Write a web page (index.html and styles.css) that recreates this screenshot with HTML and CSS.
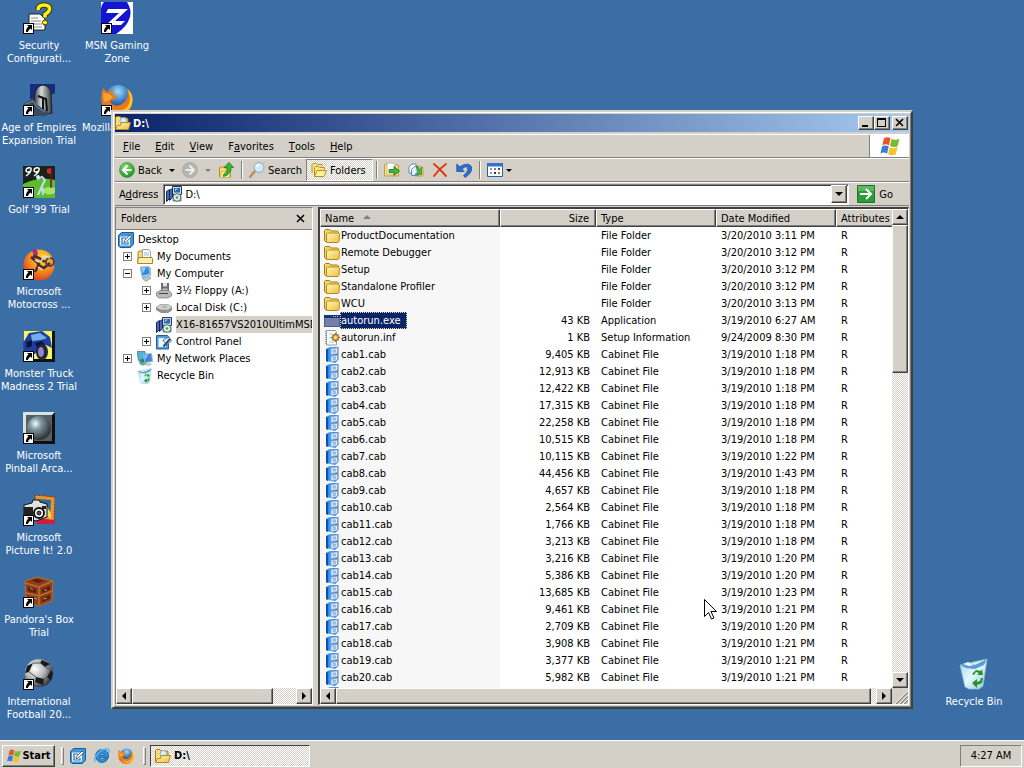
FILE: index.html
```html
<!DOCTYPE html>
<html lang="en">
<head>
  <meta charset="UTF-8">
  <meta name="viewport" content="width=device-width, initial-scale=1.0">
  <title>D:\</title>
  <link rel="stylesheet" href="styles.css">
</head>
<body>
  <!-- icon sprites -->
  <svg class="sprites" aria-hidden="true">
    <defs>
      <linearGradient id="g-folder" x1="0" y1="0" x2="1" y2="1"><stop offset="0" stop-color="#fff9b4"/><stop offset="1" stop-color="#ecbf40"/></linearGradient>
      <linearGradient id="g-cab" x1="0" y1="0" x2="1" y2="0"><stop offset="0" stop-color="#1263c8"/><stop offset=".35" stop-color="#4aa4f8"/><stop offset="1" stop-color="#3f7cc0"/></linearGradient>
      <radialGradient id="g-green" cx=".4" cy=".3" r=".7"><stop offset="0" stop-color="#8fdc7c"/><stop offset="1" stop-color="#1f9426"/></radialGradient>
      <radialGradient id="g-ball" cx=".35" cy=".35" r=".7"><stop offset="0" stop-color="#fff"/><stop offset=".5" stop-color="#b4b8b8"/><stop offset="1" stop-color="#333"/></radialGradient>
      <radialGradient id="g-steel" cx=".35" cy=".32" r=".7"><stop offset="0" stop-color="#f4fcff"/><stop offset=".35" stop-color="#7f97a3"/><stop offset="1" stop-color="#2c3030"/></radialGradient>
      <radialGradient id="g-globe" cx=".5" cy=".25" r=".7"><stop offset="0" stop-color="#9fdcf8"/><stop offset=".6" stop-color="#2f74c4"/><stop offset="1" stop-color="#153a86"/></radialGradient>
      <radialGradient id="g-sun" cx=".6" cy=".3" r=".7"><stop offset="0" stop-color="#ffe03c"/><stop offset=".6" stop-color="#f58a1c"/><stop offset="1" stop-color="#e0421c"/></radialGradient>
      <linearGradient id="g-bin" x1="0" y1="0" x2="1" y2="1"><stop offset="0" stop-color="#a4d4f4"/><stop offset=".5" stop-color="#e4f8fb"/><stop offset="1" stop-color="#8cc4dc"/></linearGradient>
      <linearGradient id="g-helm" x1="0" y1="0" x2="1" y2="0"><stop offset="0" stop-color="#2c3238"/><stop offset=".4" stop-color="#d4dcdc"/><stop offset="1" stop-color="#30363c"/></linearGradient>
    </defs>

    <symbol id="shortcut" viewBox="0 0 11 11"><path d="M0 0h11v11H0z" fill="#000"/><path d="M1 1h9v9H1z" fill="#fff"/><path d="M4 2h5v5L7.500 5.500Q5 7 5 9H3Q2.500 6 5.500 3.500z" fill="#000"/></symbol>

    <symbol id="i-folder" viewBox="0 0 16 16"><path d="M.5 12.500v-10l1-1h4l1.500 1.500h6.500l1 1v9l-1 1h-11.500z" fill="#f3d56c" stroke="#a37b1c"/><path d="M2.500 14v-8l1-1h11l1 1-.5 7.500-1 1H3z" fill="url(#g-folder)" stroke="#b58a22"/></symbol>
    <symbol id="i-cab" viewBox="0 0 16 16"><path d="M2 2l4-2h8.500v13L11 16l-9-2z" fill="url(#g-cab)"/><path d="M2 2l2 1v12l-2-1z" fill="#0f4fae"/><path d="M7 1.800l6.500-1v5.700l-6.500 1z" fill="#d9e9f8" stroke="#7ea3cc" stroke-width=".6"/><path d="M7 9.300l6.500-1v5.200l-6.500 1.200z" fill="#d9e9f8" stroke="#7ea3cc" stroke-width=".6"/><path d="M9.300 3h2v2h-2zM9.300 10.300h2v2h-2z" fill="#fff" stroke="#5f86b2" stroke-width=".7"/></symbol>
    <symbol id="i-exe" viewBox="0 0 16 16"><path d="M0 2h16v12H0z" fill="#4f5c94"/><path d="M1 5h14v8H1z" fill="#7480a6"/><path d="M0 2h16v3H0z" fill="#14317c"/><path d="M9 3h1v1H9zM11 3h1v1h-1zM13 3h1v1h-1z" fill="#bfcbea"/></symbol>
    <symbol id="i-inf" viewBox="0 0 16 16"><path d="M2.500 .5h9l1 2v12.500h-10z" fill="#f6fbff" stroke="#8e9fa8"/><path d="M1.500 1v14" stroke="#9aa4aa" stroke-dasharray="1 1"/><path d="M5 4h3M5 8h2M5 12h5" stroke="#a9c8e6"/><path d="M11.500 3v9M7 7.500h9M8.500 4.500l6 6M14.500 4.500l-6 6" stroke="#a2691c" stroke-width="1.500"/><circle cx="11.500" cy="7.500" r="3" fill="#e9a93a" stroke="#8a5412" stroke-width=".7"/><circle cx="11.500" cy="7.500" r="1.200" fill="#fff1c0"/></symbol>
    <symbol id="i-open" viewBox="0 0 16 16"><path d="M.5 13.500V2.500l1-1H5l1.500 1.500H12l1 1v3" fill="#f7dd78" stroke="#a37b1c"/><circle cx="8.500" cy="6" r="3.500" fill="#d8f0f8" stroke="#8ea9b4"/><path d="M.5 14.500l2-4h3l1-3h9l-2 7z" fill="url(#g-folder)" stroke="#b58a22"/></symbol>
    <symbol id="i-folders" viewBox="0 0 16 16"><path d="M1 11V2.500l1-1h3l1 1h5v2" fill="#fbe587" stroke="#bb901e"/><path d="M3.500 14V5.500l1-1h3l1 1h5v2" fill="#fbe587" stroke="#bb901e"/><path d="M3.500 14.500l2.500-6h9.500l-2.500 6z" fill="#fff0a0" stroke="#bb901e"/></symbol>
    <symbol id="i-desktop" viewBox="0 0 16 16"><path d="M.5 3.500l3-3h12V12l-3 3.500H2L.5 14z" fill="#3f96d8" stroke="#1c5c98"/><path d="M2 4.500h10v9H2z" fill="#e4f4fc"/><path d="M8 6H4v6h6v-2" stroke="#2c6fae" stroke-width="1.200" fill="none"/><path d="M6 10.500l.5-2L12 3l1.800 1.500L8 10z" fill="#fff" stroke="#345" stroke-width=".8"/></symbol>
    <symbol id="i-docs" viewBox="0 0 16 16"><path d="M1 13V3l1-1h3l1 1h6v11H1z" fill="#f5dc74" stroke="#a8862a"/><path d="M5.500.5h6l2 2V9h-8z" fill="#fff" stroke="#9a9a9a"/><path d="M7 4h5M7 6h5" stroke="#9bb8d8"/><path d="M.5 14.500l1-6h13.500l.5 1v5z" fill="#fcedac" stroke="#a8862a"/></symbol>
    <symbol id="i-pc" viewBox="0 0 16 16"><path d="M3 1l9-1 1 9-8 2z" fill="#dbe6ef" stroke="#93a5b4" stroke-width=".7"/><path d="M4 1.800l7.500-.9.8 7.200-7 1.600z" fill="#2b8cee"/><path d="M4.500 2l4.500-.5-3 6z" fill="#8bd0fa"/><path d="M5 12l6-2 3 2-5 3.500z" fill="#b7c5cf" stroke="#7d8c98" stroke-width=".7"/><path d="M12 .5l2 1.500v8.500l-1.500-1z" fill="#a2b3c0"/></symbol>
    <symbol id="i-floppy" viewBox="0 0 16 16"><path d="M5 0h8v9H5z" fill="#686e78"/><path d="M7 0h4v3.500H7z" fill="#dedede"/><path d="M6.500 5.500h5V9h-5z" fill="#b9c0c8"/><path d="M.5 9.500L4 7.500h9l2.500 2.500v3L12 15H3l-2.500-2z" fill="#b8baba" stroke="#747676" stroke-width=".7"/><path d="M3 10.500h9" stroke="#444"/></symbol>
    <symbol id="i-disk" viewBox="0 0 16 16"><path d="M0 8l4-3h9l3 2.500v3L12 13H5l-5-3z" fill="#909292"/><path d="M0 7.500L4 4.500h8l4 2.700L12 10H5z" fill="#d2d4d3" stroke="#858787" stroke-width=".6"/><path d="M5 6.500l4-1 3 1-4 2z" fill="#aeb2b2"/><path d="M11 11h2" stroke="#5fd04c"/></symbol>
    <symbol id="i-setup" viewBox="0 0 16 16"><path d="M6.500 .5h9v8h-9z" fill="#ccd4d8" stroke="#253a54"/><path d="M8 2h6v4.500H8z" fill="#2368b0"/><path d="M9 2.500h3l-3 3z" fill="#8cc4f0"/><path d="M.5 5.500l3-2v9l-3 3zM3.500 4.500l3-2v9l-3 3z" fill="#4969bd" stroke="#172754"/><path d="M7 10h8v5H7z" fill="#bcc8cc" stroke="#394a54" stroke-width=".7"/><circle cx="11" cy="11.500" r="3.800" fill="#e2eeea" stroke="#51756c"/><circle cx="11" cy="11.500" r="1.300" fill="#4ca050"/></symbol>
    <symbol id="i-panel" viewBox="0 0 16 16"><path d="M.5 1.500h11l1 1v12.500H.5z" fill="#4b9bdc" stroke="#235f98"/><path d="M2.500 4h7.500v9H2.500z" fill="#eaf5fc"/><path d="M7 6l6-3 2.500 4-5 4z" fill="#e4eaf0" stroke="#667684"/><path d="M7.500 12.500L14 5" stroke="#234b84" stroke-width="2"/></symbol>
    <symbol id="i-net" viewBox="0 0 16 16"><path d="M0 .5h8l1 8-7.500 1z" fill="#4ab4e0" stroke="#6d8796"/><circle cx="6" cy="10.500" r="4" fill="#58b878"/><path d="M3 9l4-2 1 3-3 2z" fill="#2c70c4"/><path d="M6 3.500l8.500-1 1 8-7.500 1z" fill="#3987dc" stroke="#9fb3c4"/><path d="M7 4.500l4-.5-3 5z" fill="#8ccaf4"/><path d="M8 13.500l5-2 2 2-4 2z" fill="#c2ccd4"/></symbol>
    <symbol id="i-bin" viewBox="0 0 32 32"><path d="M2 7L29 1l-4 27-4 3H11l-4-2z" fill="url(#g-bin)" stroke="#8fb8d2" stroke-width=".8"/><path d="M2 7l8-3 7 3L29 1l-3 6-9 4-9-1z" fill="#5b9cd2"/><path d="M5 6l5-2 6 3-5 1z" fill="#e8f8ff"/><path d="M14 16l4-4 5 1 1-2 1 6h-6l2-2-3-1-2 3zM25 20l-1 5-5 2v3l-5-5 5-4v3l3-1 1-3z" fill="#269327"/></symbol>
    <symbol id="i-ie" viewBox="0 0 16 16"><path d="M8 1.500a6.500 6.500 0 1 0 6 9h-4a2.600 2.600 0 0 1-4.500-1H14.500A6.500 6.500 0 0 0 8 1.500zM5.500 7a2.600 2.600 0 0 1 5 0z" fill="#2b8cd8" stroke="#1860a6" stroke-width=".8"/><path d="M1 14C-1.500 10 8-1 14.500 1.500 16 2.500 15 4 14.500 5" fill="none" stroke="#5bb4ee" stroke-width="1.500"/></symbol>
    <symbol id="i-fox" viewBox="0 0 32 32"><circle cx="17" cy="14" r="13" fill="url(#g-globe)"/><path d="M2 4l4 4 7-2-2 4 5 2-3 4-4 1c2 5 8 6 12 3 5-3 7-9 5-14 5 5 7 13 3 19-5 8-18 9-24 2C-1 21 0 10 2 4z" fill="#ec7914"/><path d="M26 5c4 6 4 13 0 18-5 5-12 5-17 1 6 9 19 6 22-4 2-7-1-13-5-15z" fill="#fcc62c"/><path d="M2 9l6 1 4 3-5 4-4 1z" fill="#f9a13a"/></symbol>
    <symbol id="i-flag" viewBox="0 0 20 18"><path d="M4.500 2q3-2 6 0L9 8.500Q6 6.500 3 8.500z" fill="#e8562a"/><path d="M11.500 2.500q3 2 7 0l-1.500 6.500q-3 2-7 0z" fill="#7abb2c"/><path d="M2.800 9.500q3-2 6 0l-1.500 6.500q-3-2-6 0z" fill="#3a7ad8"/><path d="M9.800 10q3 2 7 0l-1.500 6.500q-3 2-7 0z" fill="#f9c32c"/></symbol>

    <symbol id="i-back" viewBox="0 0 16 16"><circle cx="8" cy="8" r="7.500" fill="url(#g-green)" stroke="#2f9c34" stroke-width=".7"/><path d="M8.500 3.500L4 8l4.500 4.500M4 8h8.500" fill="none" stroke="#fff" stroke-width="2"/></symbol>
    <symbol id="i-forward" viewBox="0 0 16 16"><circle cx="8" cy="8" r="7.500" fill="#b4b4b0" stroke="#a2a29e" stroke-width=".7"/><path d="M7.500 3.500L12 8l-4.500 4.500M12 8H3.500" fill="none" stroke="#eee" stroke-width="2"/></symbol>
    <symbol id="i-up" viewBox="0 0 16 16"><path d="M1.500 14.500V6l1-1h3l1 1h5l1 1v8z" fill="#f7dc70" stroke="#b58e22"/><path d="M2 15.500l2-6h9l-2 6z" fill="#fff0a2" stroke="#c4a034" stroke-width=".6"/><path d="M5.500 12.500q4-2 3.500-7H6l5-5 4.500 5H13q.5 7-7.500 9z" fill="#3cb430" stroke="#1a7a1c" stroke-width=".8"/></symbol>
    <symbol id="i-search" viewBox="0 0 16 16"><path d="M1 15l5-6" stroke="#c58a5c" stroke-width="2.500" stroke-linecap="round"/><circle cx="10" cy="5.500" r="5" fill="#cdebfb" stroke="#8ea6ba"/><path d="M7.500 5a3 3 0 0 1 3-2.500" stroke="#fff" stroke-width="1.500" fill="none"/></symbol>
    <symbol id="i-move" viewBox="0 0 16 16"><path d="M.5 14V3l1-1h4l1 1h8v11z" fill="#f8e07c" stroke="#c0a038"/><path d="M3 1h6l2 2v9H3z" fill="#fff" stroke="#9fa8a8" stroke-width=".7"/><path d="M5 7.500h5v-3l5.500 4.500-5.500 4.500v-3H5z" fill="#48b43c" stroke="#1d7420" stroke-width=".8"/></symbol>
    <symbol id="i-copy" viewBox="0 0 16 16"><path d="M7 14V5l1-1h3l1 1h3v9z" fill="#f8e07c" stroke="#c0a038"/><path d="M1 5l3-3h4v9H1z" fill="#fff" stroke="#628cb4"/><path d="M3.500 7.500l3-3h4v9h-7z" fill="#e2f1fb" stroke="#628cb4"/><path d="M8 4l4 3.500L13.500 5v7.500H7L9.500 10z" fill="#48b43c" stroke="#1d7420" stroke-width=".6"/></symbol>
    <symbol id="i-delete" viewBox="0 0 16 16"><path d="M2 2q6 5 12 12M14 2Q7 7 2 14" fill="none" stroke="#e03c14" stroke-width="2" stroke-linecap="round"/></symbol>
    <symbol id="i-undo" viewBox="0 0 16 16"><path d="M.8 2v7.500h7.500L6 7.200Q10 3.500 11.300 5.500 13 9 7.500 13.500L9 15.500Q17 10.500 15.500 5 13-.5 3.500 4.700z" fill="#2c6fd2" stroke="#15459a" stroke-width=".7"/></symbol>
    <symbol id="i-views" viewBox="0 0 16 16"><path d="M.5 1.500h15v13H.5z" fill="#fff" stroke="#2460ac"/><path d="M0 1h16v3.500H0z" fill="#2f74c8"/><path d="M3 6h2v2H3zM3 10h2v2H3z" fill="#8a9cb4"/><path d="M7 6h2v2H7z" fill="#b06a86"/><path d="M7 10h2v2H7z" fill="#203a78"/><path d="M11 6h2v2h-2z" fill="#284a9c"/><path d="M11 10h2v2h-2z" fill="#6a9c4c"/></symbol>
    <symbol id="i-go" viewBox="0 0 18 18"><path d="M.5.5h17v17H.5z" fill="#2c9c38" stroke="#1c7428"/><path d="M1 1h16v5H1z" fill="#5cb860"/><path d="M3 9h11M9 4l5 5-5 5" fill="none" stroke="#fff" stroke-width="2"/></symbol>

    <symbol id="d-security" viewBox="0 0 32 32"><path d="M6 12h11l5 5v11H6z" fill="#fff" stroke="#222"/><path d="M8 16h7M8 19h10M8 22h11M8 25h11" stroke="#888"/><path d="M15 8q0-5 6-5t5.500 4.500Q26 10 22 12.500v3" fill="none" stroke="#3c3800" stroke-width="5.500"/><path d="M15 8q0-5 6-5t5.500 4.500Q26 10 22 12.500v3" fill="none" stroke="#fff01c" stroke-width="3.500"/><circle cx="22" cy="20.500" r="2.500" fill="#fff01c" stroke="#3c3800"/></symbol>
    <symbol id="d-zone" viewBox="0 0 32 32"><path d="M0 0h32v32H0z" fill="#fff"/><path d="M3 0h23q5 8 3 15-3 10-14 17H0V8q0-5 3-8z" fill="#1414d2"/><path d="M7 7h20L14 19h10l-4 4H5L18 11H5z" fill="#fff"/></symbol>
    <symbol id="d-age" viewBox="0 0 32 32"><path d="M7 0h25v9l-4 2 1 17H14L7 14z" fill="#182a7c"/><path d="M12 8q3-7 9-7 7 2 7 10l1 18-7 1-9-6-2-8z" fill="url(#g-helm)" stroke="#1c2024"/><path d="M15 12l8 3 1 12M20 14v12" stroke="#111" stroke-width="2" fill="none"/><path d="M1 20l9-6 3 6 12 8-2 4H8z" fill="#3b4a5c"/><path d="M3 20l7-3 4 6 8 5" stroke="#7d8e9c" fill="none"/></symbol>
    <symbol id="d-golf" viewBox="0 0 32 32"><path d="M0 0h32v32H0z" fill="#18231c"/><path d="M0 18q16-8 32-4v18H0z" fill="#5cbc30"/><path d="M18 24q7-5 14-2v5q-8 4-14-3z" fill="#a6e468"/><path d="M8 2Q3 1 3 5q1 2 5 0M8 2q1 4-5 8M16 2q-5-1-5 3 1 2 5 0M16 2q1 4-5 8" fill="none" stroke="#fff" stroke-width="1.500"/><path d="M28 2v20" stroke="#7c1414" stroke-width="1.500"/><path d="M28 2v6l-4-1V3z" fill="#e02424"/><path d="M14 13l5-2 3 3-3 6 1 9M19 20l-4 9" stroke="#c4dcec" stroke-width="2" fill="none"/><circle cx="15" cy="11" r="2" fill="#dbe6ee"/></symbol>
    <symbol id="d-moto" viewBox="0 0 32 32"><circle cx="16" cy="17" r="15.500" fill="url(#g-sun)"/><path d="M9 1l5 1 1 5-4 3z" fill="#a0307c"/><path d="M10 8l6 2 6 4M8 9l8 7-4 8M14 16l7 4 6-5" stroke="#4a2c30" stroke-width="2.500" fill="none"/><circle cx="27" cy="14" r="4" fill="none" stroke="#53404a" stroke-width="2"/><path d="M18 13l4-5 5 2M12 12l4 2M15 19l4 3" stroke="#ddd" stroke-width="1.500" fill="none"/></symbol>
    <symbol id="d-truck" viewBox="0 0 32 32"><path d="M1 1h31v31H1z" fill="#111"/><path d="M1 1h28v28H1z" fill="#f4f464"/><path d="M0 13L6 3l13-2 8 6 2 11-6-3-6 1-5 8-11 1z" fill="#1f3ea4"/><path d="M8 5l9-2 7 5-6 2-9 1z" fill="#74b0e8"/><path d="M3 12l6-2v6l-5 2zM12 13l7-2 3 4-8 3z" fill="#0b1434"/><ellipse cx="19" cy="22" rx="6" ry="8" fill="#24233c"/><ellipse cx="18" cy="22" rx="3" ry="5" fill="#8d8bc0"/></symbol>
    <symbol id="d-pinball" viewBox="0 0 32 32"><path d="M0 0h32v32H0z" fill="#0c1010"/><path d="M0 0h32l-3 3v26H3L0 32z" fill="#d8e4e4"/><path d="M3 3h26v26H3z" fill="#575e5e"/><circle cx="16" cy="16" r="12" fill="url(#g-steel)"/></symbol>
    <symbol id="d-picture" viewBox="0 0 32 32"><path d="M12 1l20 2-1 26-17-4z" fill="#e8962c" stroke="#8c2c14" stroke-dasharray="2 1"/><path d="M15 5l13 1-1 18-12-3z" fill="#2c6a9c"/><path d="M16 18l7-7 5 8v6z" fill="#f0d45c"/><path d="M13 24l9 1 9 1 1 4H14z" fill="#d01c3c"/><path d="M1 11l8-2 1-3h6l1 2 7 2v13L13 27 1 23z" fill="#e0e0dc" stroke="#111"/><path d="M1 13h9v9H1zM19 12h4v3h-4z" fill="#222"/><circle cx="16" cy="19" r="5" fill="#fff" stroke="#111" stroke-width="2"/><circle cx="16" cy="19" r="2" fill="#555" stroke="#111"/></symbol>
    <symbol id="d-box" viewBox="0 0 32 32"><path d="M2 5l12-4 16 4-1 20-13 5L3 26z" fill="#8f3c1a" stroke="#b8702e"/><path d="M2 7l14 4 14-6M16 11v18M3 17l13 3 13-5" stroke="#b8702e" stroke-width="1.500" fill="none"/><path d="M5 11l8 2v4l-8-2zM19 13l8-3v4l-8 3zM19 22l8-3v4l-8 3zM8 4l6-1 7 2-6 2z" fill="#571f10"/><path d="M7 12l3 2M21 14l3 0M20 23l4-1M11 22l3 1" stroke="#e0905c"/></symbol>
    <symbol id="d-ball" viewBox="0 0 32 32"><circle cx="16" cy="15" r="14" fill="url(#g-ball)"/><path d="M10 5L4 8l-2 7 4-1zM19 2l8 4-5 3-5-4zM28 12l2 3-2 8-4-4zM13 19l8 2-1 6-8-3z" fill="#181c1c"/><path d="M10 5l7 0M6 14l7 5M21 21l3-2M22 9l6 3" stroke="#50585c" fill="none"/></symbol>
  </svg>

  <main class="desktop">
    <div class="icon-columns">
      <div class="icon-column">
        <a class="desk-icon" href="#"><svg><use href="#d-security"/><use href="#shortcut" x="0" y="21" width="11" height="11"/></svg><span>Security Configurati...</span></a>
        <a class="desk-icon" href="#"><svg><use href="#d-age"/><use href="#shortcut" x="0" y="21" width="11" height="11"/></svg><span>Age of Empires Expansion Trial</span></a>
        <a class="desk-icon" href="#"><svg><use href="#d-golf"/><use href="#shortcut" x="0" y="21" width="11" height="11"/></svg><span>Golf '99 Trial</span></a>
        <a class="desk-icon" href="#"><svg><use href="#d-moto"/><use href="#shortcut" x="0" y="21" width="11" height="11"/></svg><span>Microsoft Motocross ...</span></a>
        <a class="desk-icon" href="#"><svg><use href="#d-truck"/><use href="#shortcut" x="0" y="21" width="11" height="11"/></svg><span>Monster Truck Madness 2 Trial</span></a>
        <a class="desk-icon" href="#"><svg><use href="#d-pinball"/><use href="#shortcut" x="0" y="21" width="11" height="11"/></svg><span>Microsoft Pinball Arca...</span></a>
        <a class="desk-icon" href="#"><svg><use href="#d-picture"/><use href="#shortcut" x="0" y="21" width="11" height="11"/></svg><span>Microsoft Picture It! 2.0</span></a>
        <a class="desk-icon" href="#"><svg><use href="#d-box"/><use href="#shortcut" x="0" y="21" width="11" height="11"/></svg><span>Pandora's Box Trial</span></a>
        <a class="desk-icon" href="#"><svg><use href="#d-ball"/><use href="#shortcut" x="0" y="21" width="11" height="11"/></svg><span>International Football 20...</span></a>
      </div>
      <div class="icon-column">
        <a class="desk-icon" href="#"><svg><use href="#d-zone"/><use href="#shortcut" x="0" y="21" width="11" height="11"/></svg><span>MSN Gaming Zone</span></a>
        <a class="desk-icon" href="#"><svg><use href="#i-fox"/><use href="#shortcut" x="0" y="21" width="11" height="11"/></svg><span>Mozilla Firefox</span></a>
      </div>
    </div>
    <a class="desk-icon recycle" href="#"><svg><use href="#i-bin"/></svg><span>Recycle Bin</span></a>

    <section class="window">
      <header class="title-bar">
        <svg class="icon"><use href="#i-open"/></svg>
        <h1>D:\</h1>
        <div class="title-buttons">
          <button class="btn" aria-label="Minimize"><svg viewBox="0 0 12 10"><path d="M2 7h6v2H2z"/></svg></button>
          <button class="btn" aria-label="Maximize"><svg viewBox="0 0 12 10"><path d="M1 0h9v9H1zM2 2v6h7V2z" fill-rule="evenodd"/></svg></button>
          <button class="btn close" aria-label="Close"><svg viewBox="0 0 12 10"><path d="M2 1l7 7M9 1L2 8" stroke="#000" stroke-width="1.600"/></svg></button>
        </div>
      </header>

      <nav class="band menu-bar">
        <button><u>F</u>ile</button>
        <button><u>E</u>dit</button>
        <button><u>V</u>iew</button>
        <button>F<u>a</u>vorites</button>
        <button><u>T</u>ools</button>
        <button><u>H</u>elp</button>
        <div class="throbber"><svg><use href="#i-flag"/></svg></div>
      </nav>

      <div class="band tool-bar">
        <button><svg class="icon"><use href="#i-back"/></svg>Back</button>
        <button class="drop" aria-label="Back history"><i class="arrow down"></i></button>
        <button aria-label="Forward"><svg class="icon"><use href="#i-forward"/></svg></button>
        <button class="drop off" aria-label="Forward history"><i class="arrow down"></i></button>
        <button aria-label="Up"><svg class="icon"><use href="#i-up"/></svg></button>
        <span class="sep"></span>
        <button><svg class="icon"><use href="#i-search"/></svg>Search</button>
        <button class="pressed"><svg class="icon"><use href="#i-folders"/></svg>Folders</button>
        <span class="sep"></span>
        <button aria-label="Move To"><svg class="icon"><use href="#i-move"/></svg></button>
        <button aria-label="Copy To"><svg class="icon"><use href="#i-copy"/></svg></button>
        <button aria-label="Delete"><svg class="icon"><use href="#i-delete"/></svg></button>
        <button aria-label="Undo"><svg class="icon"><use href="#i-undo"/></svg></button>
        <span class="sep"></span>
        <button aria-label="Views"><svg class="icon"><use href="#i-views"/></svg><i class="arrow down"></i></button>
      </div>

      <form class="band address-bar">
        <label for="address">A<u>d</u>dress</label>
        <div class="combo">
          <svg class="icon"><use href="#i-setup"/></svg>
          <input type="text" id="address" value="D:\">
          <button type="button" class="btn" aria-label="Show addresses"><i class="arrow down"></i></button>
        </div>
        <button type="button" class="go"><svg><use href="#i-go"/></svg>Go</button>
      </form>

      <div class="panes">
        <aside class="folders">
          <div class="folders-head">
            <h2>Folders</h2>
            <button aria-label="Close folders"><svg viewBox="0 0 9 9"><path d="M1 1l7 7M8 1L1 8" stroke="#000" stroke-width="1.500"/></svg></button>
          </div>
          <ul class="tree">
            <li><svg class="icon"><use href="#i-desktop"/></svg><span>Desktop</span></li>
            <li class="l1"><button class="expander" aria-label="Expand"></button><svg class="icon"><use href="#i-docs"/></svg><span>My Documents</span></li>
            <li class="l1"><button class="expander open" aria-label="Collapse"></button><svg class="icon"><use href="#i-pc"/></svg><span>My Computer</span></li>
            <li class="l2"><button class="expander" aria-label="Expand"></button><svg class="icon"><use href="#i-floppy"/></svg><span>3½ Floppy (A:)</span></li>
            <li class="l2"><button class="expander" aria-label="Expand"></button><svg class="icon"><use href="#i-disk"/></svg><span>Local Disk (C:)</span></li>
            <li class="l2 leaf current"><svg class="icon"><use href="#i-setup"/></svg><span>X16-81657VS2010UltimMSDN</span></li>
            <li class="l2"><button class="expander" aria-label="Expand"></button><svg class="icon"><use href="#i-panel"/></svg><span>Control Panel</span></li>
            <li class="l1"><button class="expander" aria-label="Expand"></button><svg class="icon"><use href="#i-net"/></svg><span>My Network Places</span></li>
            <li class="l1 leaf"><svg class="icon"><use href="#i-bin"/></svg><span>Recycle Bin</span></li>
          </ul>
          <div class="scroll across">
            <button class="btn" aria-label="Scroll left"><i class="arrow left"></i></button>
            <div class="track"><div class="btn thumb tree-thumb"></div></div>
            <button class="btn" aria-label="Scroll right"><i class="arrow right"></i></button>
          </div>
        </aside>

        <div class="files">
          <div class="list">
            <table>
              <colgroup><col class="c-name"><col class="c-size"><col class="c-type"><col class="c-date"><col></colgroup>
              <thead>
                <tr><th>Name <i class="arrow up sorted"></i></th><th class="size">Size</th><th>Type</th><th>Date Modified</th><th>Attributes</th></tr>
              </thead>
              <tbody id="rows"></tbody>
            </table>
          </div>
          <div class="scroll down-bar">
            <button class="btn" aria-label="Scroll up"><i class="arrow up"></i></button>
            <div class="track"><div class="btn thumb list-thumb"></div></div>
            <button class="btn" aria-label="Scroll down"><i class="arrow down"></i></button>
          </div>
          <div class="scroll across">
            <button class="btn" aria-label="Scroll left"><i class="arrow left"></i></button>
            <div class="track"><div class="btn thumb wide-thumb"></div></div>
            <button class="btn" aria-label="Scroll right"><i class="arrow right"></i></button>
          </div>
          <svg class="grip" viewBox="0 0 16 16"><path d="M4 16L16 4M8 16l8-8M12 16l4-4" stroke="#808080" stroke-width="1.500"/><path d="M3 16L16 3M7 16l9-9M11 16l5-5" stroke="#fff" stroke-width=".8"/></svg>
        </div>
      </div>
    </section>

    <svg class="cursor" viewBox="0 0 13 21"><path d="M.5.500v17l4-4 3 6.500 2.500-1-3-6.500h5.500z" fill="#fff" stroke="#000"/></svg>
  </main>

  <footer class="task-bar">
    <button class="btn start"><svg class="icon"><use href="#i-flag"/></svg>Start</button>
    <span class="handle"></span>
    <div class="quick">
      <button aria-label="Show Desktop"><svg class="icon"><use href="#i-desktop"/></svg></button>
      <button aria-label="Internet Explorer"><svg class="icon"><use href="#i-ie"/></svg></button>
      <button aria-label="Firefox"><svg class="icon"><use href="#i-fox"/></svg></button>
    </div>
    <span class="handle"></span>
    <button class="task"><svg class="icon"><use href="#i-open"/></svg>D:\</button>
    <time class="clock">4:27 AM</time>
  </footer>

  <script>
    const day = '3/19/2010 ';
    const files = [
      ['folder', 'ProductDocumentation', '', 'File Folder', '3/20/2010 3:11 PM'],
      ['folder', 'Remote Debugger', '', 'File Folder', '3/20/2010 3:12 PM'],
      ['folder', 'Setup', '', 'File Folder', '3/20/2010 3:12 PM'],
      ['folder', 'Standalone Profiler', '', 'File Folder', '3/20/2010 3:12 PM'],
      ['folder', 'WCU', '', 'File Folder', '3/20/2010 3:13 PM'],
      ['exe', 'autorun.exe', '43 KB', 'Application', '3/19/2010 6:27 AM'],
      ['inf', 'autorun.inf', '1 KB', 'Setup Information', '9/24/2009 8:30 PM']
    ];

    // size in KB and time for cab1, cab2, ...
    const cabs = [
      ['9,405', '1:18'], ['12,913', '1:18'], ['12,422', '1:18'], ['17,315', '1:18'], ['22,258', '1:18'],
      ['10,515', '1:18'], ['10,115', '1:22'], ['44,456', '1:43'], ['4,657', '1:18'], ['2,564', '1:18'],
      ['1,766', '1:18'], ['3,213', '1:18'], ['3,216', '1:20'], ['5,386', '1:20'], ['13,685', '1:23'],
      ['9,461', '1:21'], ['2,709', '1:20'], ['3,908', '1:21'], ['3,377', '1:21'], ['5,982', '1:21']
    ];
    cabs.forEach((cab, i) => {
      files.push(['cab', `cab${i + 1}.cab`, `${cab[0]} KB`, 'Cabinet File', `${day}${cab[1]} PM`]);
    });
    files.push(['cab', '', '', '', '']);

    document.getElementById('rows').innerHTML = files.map(([icon, name, size, type, date]) => `
      <tr class="${name === 'autorun.exe' ? 'selected' : ''}">
        <td><div class="name"><svg class="icon"><use href="#i-${icon}"/></svg><span>${name}</span></div></td>
        <td class="size">${size}</td><td>${type}</td><td>${date}</td><td>${name ? 'R' : ''}</td>
      </tr>`).join('');
  </script>
</body>
</html>
```

FILE: styles.css
```css
* { box-sizing: border-box; }

:root {
  --face: #d4d0c8;
  --shade: #808080;
  --dark: #404040;
  --navy: #0a246a;
  --dither: repeating-conic-gradient(#fff 0 25%, #d4d0c8 0 50%) 0 0 / 2px 2px;
}

body {
  margin: 0;
  height: 100vh;
  display: flex;
  flex-direction: column;
  overflow: hidden;
  background: #3a6ea5;
  color: #000;
  font: 11px/13px Tahoma, "DejaVu Sans Condensed", "DejaVu Sans", sans-serif;
}

button, input { font: inherit; color: inherit; margin: 0; padding: 0; border: 0; background: none; }
button { display: flex; align-items: center; justify-content: center; white-space: nowrap; }
h1, h2 { margin: 0; font: inherit; }
.sprites { position: absolute; width: 0; height: 0; }
.icon { width: 16px; height: 16px; flex: none; }

.btn {
  background: var(--face);
  border: 1px solid;
  border-color: #fff var(--dark) var(--dark) #fff;
  box-shadow: inset -1px -1px var(--shade);
}

.arrow { width: 0; height: 0; border: 4px solid transparent; flex: none; }
.arrow.down { border-width: 4px 4px 0; border-top-color: #000; }
.arrow.up { border-width: 0 4px 4px; border-bottom-color: #000; }
.arrow.left { border-width: 4px 4px 4px 0; border-right-color: #000; }
.arrow.right { border-width: 4px 0 4px 4px; border-left-color: #000; }

/* desktop */
.desktop { position: relative; flex: 1; min-height: 0; }
.icon-columns { display: flex; }
.icon-column { width: 78px; }
.desk-icon {
  display: flex;
  flex-direction: column;
  align-items: center;
  gap: 5px;
  height: 82px;
  padding-top: 2px;
  color: #fff;
  text-align: center;
  text-decoration: none;
}
.desk-icon svg { width: 32px; height: 32px; flex: none; }
.desk-icon span { width: 78px; }
.recycle { position: absolute; right: 11px; bottom: 2px; width: 78px; }

/* explorer window */
.window {
  position: absolute;
  inset: 110px 111px 31px 111px;
  display: flex;
  flex-direction: column;
  padding: 2px;
  background: var(--face);
  border: 2px solid;
  border-color: var(--face) var(--dark) var(--dark) var(--face);
  box-shadow: inset 1px 1px #fff, inset -1px -1px var(--shade);
}
.title-bar {
  display: flex;
  align-items: center;
  gap: 2px;
  height: 18px;
  margin-bottom: 2px;
  padding-right: 1px;
  background: linear-gradient(90deg, var(--navy), #a6caf0);
  color: #fff;
}
.title-bar h1 { flex: 1; font-weight: bold; }
.title-buttons { display: flex; }
.title-buttons .btn { width: 16px; height: 14px; }
.title-buttons svg { width: 12px; height: 10px; }
.title-buttons .close { margin-left: 2px; }

.band {
  display: flex;
  align-items: center;
  height: 24px;
  flex: none;
  border-top: 1px solid #fff;
  border-bottom: 1px solid var(--shade);
}
.menu-bar { gap: 1px; padding-left: 1px; }
.menu-bar button { padding: 0 7px; }
.throbber {
  align-self: stretch;
  display: flex;
  align-items: center;
  justify-content: center;
  width: 40px;
  margin-left: auto;
  background: #fff;
  border-left: 1px solid var(--shade);
}
.throbber svg { width: 22px; height: 20px; }

.tool-bar button { gap: 3px; height: 22px; padding: 0 4px; }
.tool-bar .drop { padding: 0 3px; }
.tool-bar .arrow { border-width: 3px 3px 0; }
.off .arrow.down { border-top-color: var(--shade); }
.tool-bar .pressed {
  padding: 0 6px 0 4px;
  background: var(--dither);
  border: 1px solid;
  border-color: var(--shade) #fff #fff var(--shade);
}
.sep { width: 2px; height: 18px; margin: 0 2px 0 3px; border-left: 1px solid var(--shade); border-right: 1px solid #fff; }

.address-bar { gap: 5px; padding-left: 4px; }
.combo {
  flex: 1;
  display: flex;
  align-items: center;
  gap: 3px;
  height: 21px;
  padding: 0 1px 0 2px;
  background: #fff;
  border: 1px solid;
  border-color: var(--shade) #fff #fff var(--shade);
  box-shadow: inset 1px 1px var(--dark);
}
.combo input { flex: 1; min-width: 0; outline: 0; }
.combo .btn { width: 16px; height: 18px; }
.go { gap: 4px; padding: 0 16px 0 3px; }
.go svg { width: 18px; height: 18px; }

.panes { flex: 1; display: flex; gap: 5px; min-height: 0; padding-top: 1px; }
.folders {
  width: 198px;
  flex: none;
  display: flex;
  flex-direction: column;
  background: #fff;
  border: 1px solid;
  border-color: var(--shade) #fff #fff var(--shade);
}
.folders-head {
  display: flex;
  align-items: center;
  justify-content: space-between;
  height: 22px;
  padding: 0 7px 0 5px;
  background: var(--face);
  border-bottom: 1px solid var(--shade);
}
.folders-head svg { width: 9px; height: 9px; }
.tree { flex: 1; min-height: 0; margin: 0; padding: 1px 0 0 2px; list-style: none; overflow: hidden; }
.tree li { display: flex; align-items: center; gap: 4px; height: 17px; line-height: 17px; white-space: nowrap; }
.tree .l1 { padding-left: 5px; }
.tree .l2 { padding-left: 24px; }
.tree .leaf.l1 { padding-left: 19px; }
.tree .leaf.l2 { padding-left: 38px; }
.tree .current span { background: var(--face); }
.expander {
  width: 9px;
  height: 9px;
  margin-right: 1px;
  flex: none;
  border: 1px solid var(--shade);
  background:
    linear-gradient(#000, #000) 1px 3px / 5px 1px no-repeat,
    linear-gradient(#000, #000) 3px 1px / 1px 5px no-repeat;
}
.expander.open { background: linear-gradient(#000, #000) 1px 3px / 5px 1px no-repeat; }

.scroll { display: flex; }
.scroll > .btn { width: 16px; height: 16px; flex: none; }
.track { flex: 1; min-width: 0; background: var(--dither); }
.across .thumb { height: 16px; }
.tree-thumb { width: 86%; }
.wide-thumb { width: 99%; }
.list-thumb { height: 33%; }
.down-bar { flex-direction: column; }
.down-bar .track { min-height: 0; }

.files {
  flex: 1;
  min-width: 0;
  display: grid;
  grid-template-columns: minmax(0, 1fr) 16px;
  grid-template-rows: minmax(0, 1fr) 16px;
  background: var(--face);
  border: solid;
  border-width: 2px 1px 1px 2px;
  border-color: var(--dark) #fff #fff var(--dark);
}
.list { overflow: hidden; background: #fff; }
.list table { width: 100%; table-layout: fixed; border-collapse: separate; border-spacing: 0; }
.c-name { width: 180px; }
.c-size { width: 96px; }
.c-type, .c-date { width: 120px; }
.list th {
  height: 18px;
  padding: 0 4px;
  font-weight: normal;
  text-align: left;
  white-space: nowrap;
  background: var(--face);
  border: 1px solid;
  border-color: #fff var(--dark) var(--dark) #fff;
  box-shadow: inset -1px -1px var(--shade);
}
.list th:last-child { border-right: 0; padding-right: 0; box-shadow: inset 0 -1px var(--shade); }
.sorted { display: inline-block; margin: 0 0 3px 6px; }
.sorted.arrow.up { border-bottom-color: var(--shade); }
.list td { height: 17px; padding: 0 0 0 5px; white-space: nowrap; }
.list td:first-child { padding-left: 4px; background: #f7f7f7; }
.list .size { padding-right: 6px; text-align: right; }
.name { display: flex; align-items: center; height: 17px; }
.name span { padding: 0 6px 0 1px; line-height: 17px; }
.selected .name span { background: var(--navy); color: #fff; outline: 1px dotted #f5db95; outline-offset: -1px; }
.grip { width: 16px; height: 16px; }

.cursor { position: absolute; left: 704px; top: 599px; width: 13px; height: 21px; }

/* task bar */
.task-bar {
  display: flex;
  align-items: center;
  height: 28px;
  flex: none;
  padding: 2px 2px 0;
  background: var(--face);
  border-top: 1px solid #fff;
}
.start { width: 53px; height: 22px; font-weight: bold; }
.handle { width: 3px; height: 18px; margin: 0 4px 0 6px; border: 1px solid; border-color: #fff var(--shade) var(--shade) #fff; }
.quick { display: flex; gap: 8px; margin: 0 3px 0 2px; }
.task {
  justify-content: flex-start;
  gap: 3px;
  width: 160px;
  height: 22px;
  padding-left: 4px;
  font-weight: bold;
  background: var(--dither);
  border: 1px solid;
  border-color: var(--dark) #fff #fff var(--dark);
}
.clock {
  display: flex;
  align-items: center;
  justify-content: center;
  width: 62px;
  height: 22px;
  margin-left: auto;
  border: 1px solid;
  border-color: var(--shade) #fff #fff var(--shade);
}
```
